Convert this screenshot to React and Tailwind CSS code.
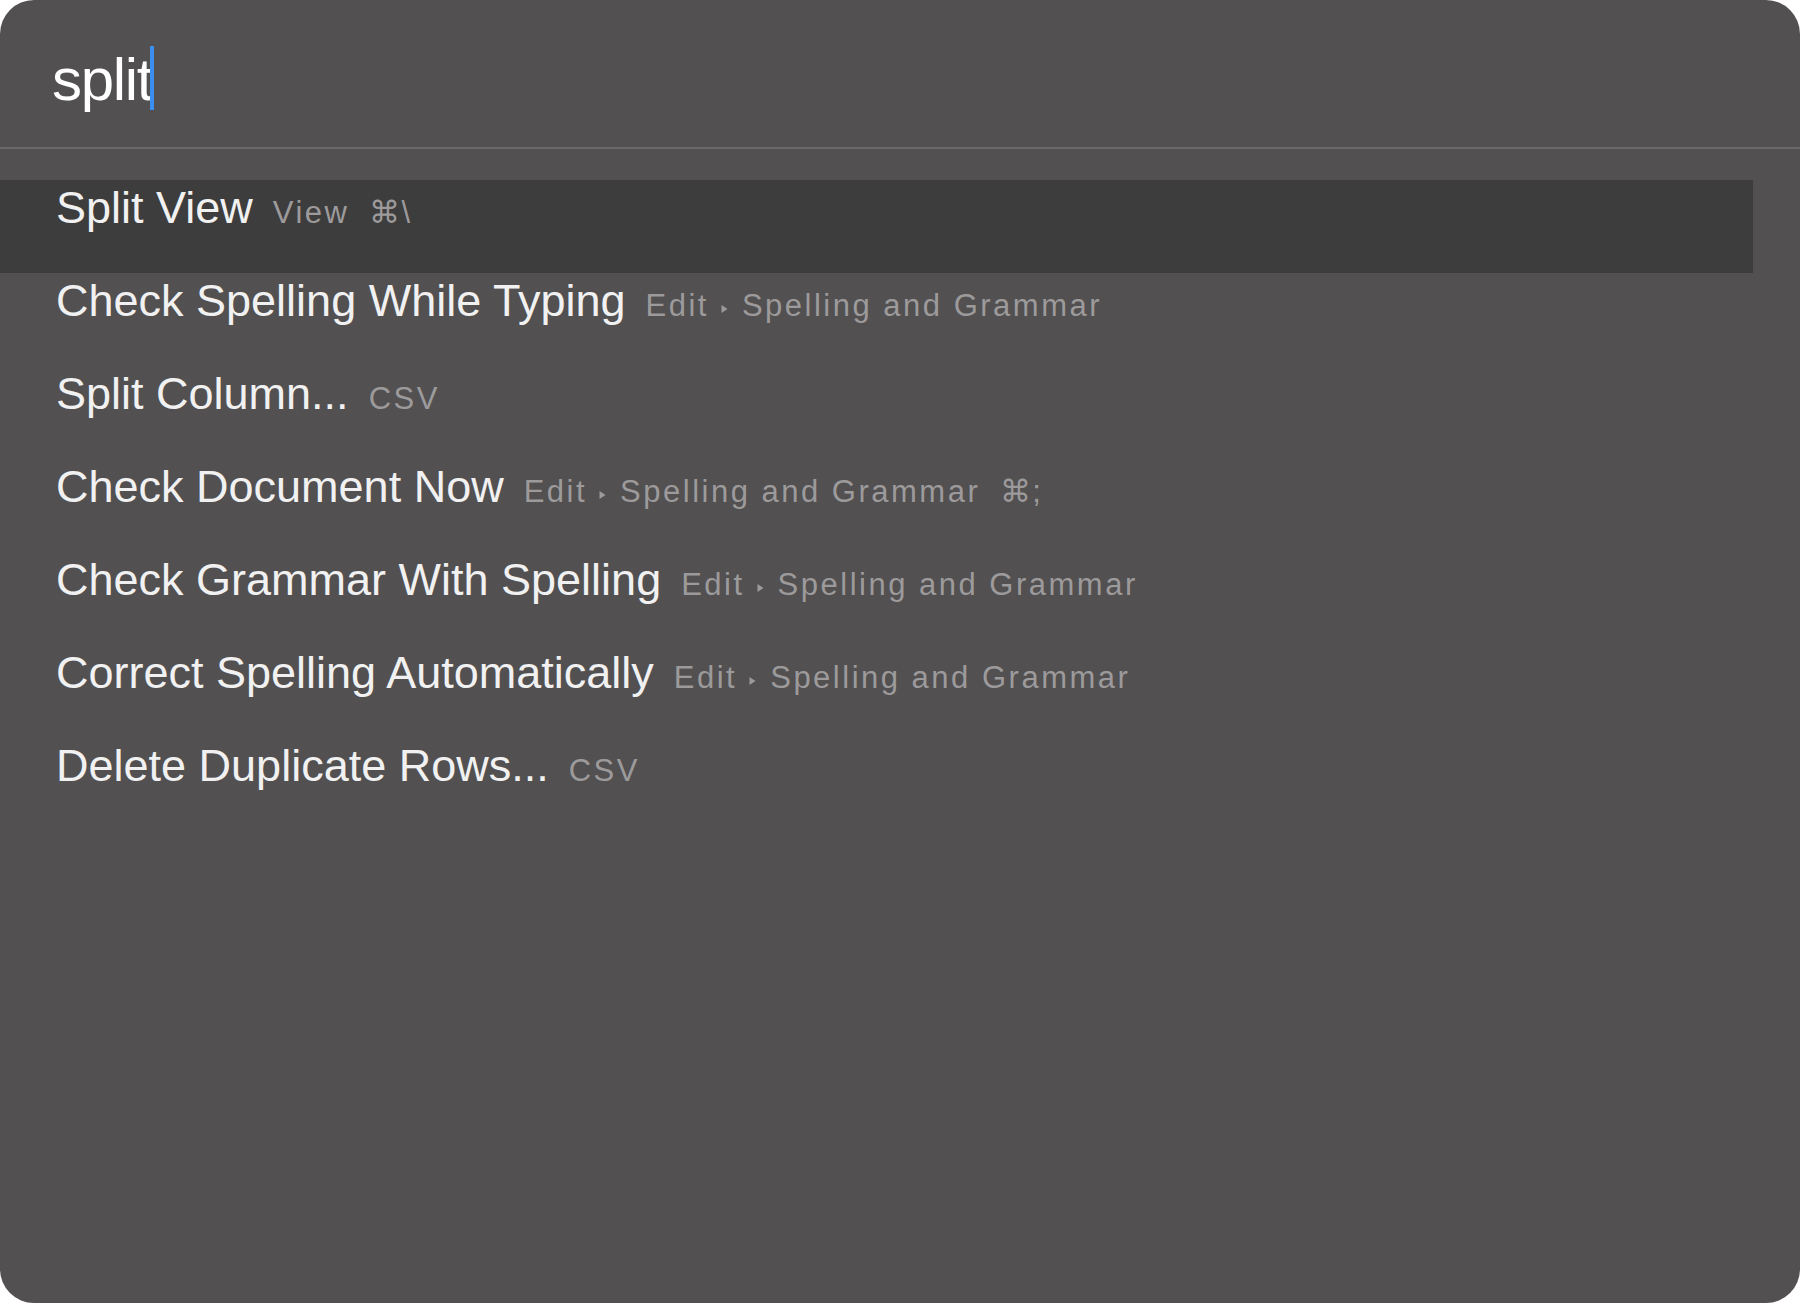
import React from "react";

const rows = [
  { main: "Split View", sec: [{ t: "View" }, { k: "⌘\\" }], selected: true },
  { main: "Check Spelling While Typing", sec: [{ t: "Edit" }, { arrow: true }, { t: "Spelling and Grammar" }] },
  { main: "Split Column...", sec: [{ t: "CSV" }] },
  { main: "Check Document Now", sec: [{ t: "Edit" }, { arrow: true }, { t: "Spelling and Grammar" }, { k: "⌘;" }] },
  { main: "Check Grammar With Spelling", sec: [{ t: "Edit" }, { arrow: true }, { t: "Spelling and Grammar" }] },
  { main: "Correct Spelling Automatically", sec: [{ t: "Edit" }, { arrow: true }, { t: "Spelling and Grammar" }] },
  { main: "Delete Duplicate Rows...", sec: [{ t: "CSV" }] },
];

function Arrow() {
  return (
    <svg width="7" height="10" viewBox="0 0 7 10" className="ml-[12px] mr-[14px] self-center mt-[6px]">
      <path d="M0.5 1 L6.5 5 L0.5 9 Z" fill="#9c9a9b" />
    </svg>
  );
}

function Row({ row }) {
  return (
    <div
      className={
        "flex items-baseline h-[93px] pt-[2px] pl-[56px] w-[1753px] " +
        (row.selected ? "bg-[#3d3d3d]" : "")
      }
    >
      <span className="text-[45px] leading-[52px] text-[#f1f1f1] whitespace-pre">{row.main}</span>
      <span className="flex items-baseline ml-[20px] text-[31px] leading-[52px] tracking-[2.5px] text-[#9c9a9b] whitespace-pre">
        {row.sec.map((s, i) => {
          if (s.arrow) return <Arrow key={i} />;
          if (s.k)
            return (
              <span key={i} className="ml-[20px] tracking-[1px]">
                {s.k}
              </span>
            );
          return <span key={i}>{s.t}</span>;
        })}
      </span>
    </div>
  );
}

export default function App() {
  return (
    <div className="w-[1800px] h-[1303px] bg-white" style={{ fontFamily: '"Liberation Sans", Arial, sans-serif' }}>
      <div className="w-full h-full bg-[#525051] rounded-[34px] overflow-hidden flex flex-col">
        <div className="h-[147px] flex items-start pt-[46px] pl-[52px]">
          <span className="mt-[4px] text-[60px] leading-[60px] tracking-[-1.3px] text-white">split</span>
          <span className="w-[4px] h-[64px] bg-[#3a8ef0] ml-[-2px]" />
        </div>
        <div className="h-[2px] bg-[#6b696a]" />
        <div className="pt-[31px] flex flex-col">
          {rows.map((r, i) => (
            <Row key={i} row={r} />
          ))}
        </div>
      </div>
    </div>
  );
}
